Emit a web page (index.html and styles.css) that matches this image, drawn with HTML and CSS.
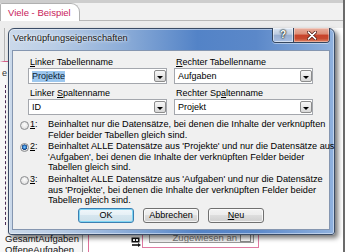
FILE: index.html
```html
<!DOCTYPE html>
<html lang="de">
<head>
<meta charset="utf-8">
<title>Verknüpfungseigenschaften</title>
<link rel="stylesheet" href="styles.css">
</head>
<body>
<div class="app">
  <div class="tabbar">
    <div class="tab">Viele - Beispiel</div>
  </div>
  <div class="workspace">
    <div class="nav">
      <div class="nav-head"></div>
      <div class="nav-body">
        <div class="nav-entry">e</div>
        <div class="nav-tree"></div>
        <div class="nav-item">GesamtAufgaben</div>
        <div class="nav-item">OffeneAufgaben</div>
      </div>
    </div>
    <div class="design">
      <div class="section">
        <div class="field-row">
          <svg class="field-icon" width="11" height="10" viewBox="0 0 11 10">
            <rect x="0.5" y="0.5" width="8" height="5" fill="#111"/>
            <rect x="2" y="2" width="2" height="2" fill="#fff"/>
            <rect x="5" y="2" width="2" height="2" fill="#fff"/>
            <path d="M1 8 H8" stroke="#111" stroke-width="1.6"/>
            <path d="M7 6 L10 8 L7 10 Z" fill="#111"/>
          </svg>
          <div class="field-box">
            <div class="field-inner">
              <span class="field-text">Zugewiesen an</span>
              <span class="field-drop"></span>
            </div>
          </div>
        </div>
      </div>
    </div>
  </div>

  <div class="dialog">
    <div class="titlebar">
      <span class="title">Verknüpfungseigenschaften</span>
      <div class="capbtns">
        <div class="cap-help">?</div>
        <div class="cap-close">
          <svg width="10" height="9" viewBox="0 0 10 9">
            <path d="M1.5 1.2 L8.5 7.8 M8.5 1.2 L1.5 7.8" stroke="#4a1208" stroke-width="3.2" stroke-linecap="round"/>
            <path d="M1.5 1.2 L8.5 7.8 M8.5 1.2 L1.5 7.8" stroke="#fff" stroke-width="1.8" stroke-linecap="round"/>
          </svg>
        </div>
      </div>
    </div>
    <div class="client">
      <div class="fields">
        <div class="field">
          <div class="label"><u>L</u>inker Tabellenname</div>
          <div class="combo"><span class="combo-text selected">Projekte</span><span class="drop"><span class="arrow"></span></span></div>
        </div>
        <div class="field">
          <div class="label"><u>R</u>echter Tabellenname</div>
          <div class="combo"><span class="combo-text">Aufgaben</span><span class="drop"><span class="arrow"></span></span></div>
        </div>
        <div class="field">
          <div class="label">Linker <u>S</u>paltenname</div>
          <div class="combo"><span class="combo-text">ID</span><span class="drop"><span class="arrow"></span></span></div>
        </div>
        <div class="field">
          <div class="label">Rechter Sp<u>a</u>ltenname</div>
          <div class="combo"><span class="combo-text">Projekt</span><span class="drop"><span class="arrow"></span></span></div>
        </div>
      </div>
      <div class="options">
        <div class="option">
          <span class="radio"></span>
          <span class="num"><u>1</u>:</span>
          <span class="desc">Beinhaltet nur die Datensätze, bei denen die Inhalte der verknüpften<br>Felder beider Tabellen gleich sind.</span>
        </div>
        <div class="option second">
          <span class="radio checked"></span>
          <span class="num"><u>2</u>:</span>
          <span class="desc">Beinhaltet ALLE Datensätze aus 'Projekte' und nur die Datensätze aus<br>'Aufgaben', bei denen die Inhalte der verknüpften Felder beider<br>Tabellen gleich sind.</span>
        </div>
        <div class="option third">
          <span class="radio"></span>
          <span class="num"><u>3</u>:</span>
          <span class="desc">Beinhaltet ALLE Datensätze aus 'Aufgaben' und nur die Datensätze<br>aus 'Projekte', bei denen die Inhalte der verknüpften Felder beider<br>Tabellen gleich sind.</span>
        </div>
      </div>
      <div class="buttons">
        <div class="btn default">OK</div>
        <div class="btn">Abbrechen</div>
        <div class="btn"><span><u>N</u>eu</span></div>
      </div>
    </div>
  </div>
</div>
</body>
</html>
```
FILE: styles.css
```css
* { box-sizing: border-box; margin: 0; padding: 0; }
html, body { width: 345px; height: 252px; overflow: hidden; }
body {
  font-family: "Liberation Sans", Arial, sans-serif;
  font-size: 9px;
  color: #000;
  background: #fff;
}
u { text-decoration: underline; text-underline-offset: 1px; }

.app {
  position: relative;
  width: 345px;
  height: 252px;
  border-right: 2px solid #6b6b6b;
  display: flex;
  flex-direction: column;
  background: #ececec;
}

/* document tab bar */
.tabbar {
  height: 21px;
  flex: none;
  display: flex;
  align-items: flex-end;
  background: linear-gradient(#cdcdcd 0, #cdcdcd 3px, #f1f1f1 3px);
  border-bottom: 1px solid #b8b8b8;
}
.tab {
  width: 80px;
  height: 18px;
  margin-bottom: -1px;
  padding-left: 7px;
  background: #fff;
  border: 1px solid #b0b0b0;
  border-bottom: none;
  border-radius: 2px 9px 0 0;
  color: #c8215a;
  font-size: 9.5px;
  line-height: 17px;
  white-space: nowrap;
}

/* background workspace */
.workspace {
  flex: 1;
  display: flex;
  min-height: 0;
  padding-top: 7px;
  background: #ececec;
}
.nav {
  width: 83px;
  flex: none;
  display: flex;
  flex-direction: column;
  background: #fff;
  border-right: 1px solid #a8a8a8;
}
.nav-head {
  height: 34px;
  flex: none;
  background: #ececec;
  border-left: 4px solid #ececec;
  box-shadow: inset 1px 0 0 #b5b5b5;
  border-bottom: 1px solid #d9608a;
}
.nav-body {
  flex: 1;
  display: flex;
  flex-direction: column;
  background: #f7f7f7;
}
.nav-entry {
  height: 11px;
  margin-top: 6px;
  padding-left: 2px;
  line-height: 11px;
  color: #333;
}
.nav-tree {
  height: 140px;
  margin: 6px 0 0 5px;
  border-left: 1px dashed #4a2a55;
}
.nav-item {
  height: 11px;
  padding-left: 5px;
  line-height: 11px;
  font-size: 9.5px;
  color: #111;
  white-space: nowrap;
}
.nav-tree + .nav-item { margin-top: 8px; }

.design {
  flex: 1;
  background: #fff;
  padding-left: 5px;
  display: flex;
  align-items: flex-start;
}
.section {
  flex: 1;
  margin-top: 200px;
  height: 30px;
  border-left: 1px solid #e0709a;
  padding-top: 4px;
}
.field-row {
  display: flex;
  align-items: center;
  padding-left: 42px;
}
.field-icon { flex: none; margin-top: 3px; }
.field-box {
  width: 117px;
  height: 16px;
  border: 1px solid #e07aa2;
  padding: 0 4px 0 6px;
}
.field-inner {
  height: 10px;
  border: 1px solid #9a9a9a;
  border-top: none;
  background: #f4f4f4;
  display: flex;
  justify-content: flex-end;
  align-items: center;
  padding-right: 2px;
  color: #777;
  font-size: 9.5px;
  line-height: 10px;
}
.field-drop {
  width: 11px;
  height: 8px;
  margin-left: 3px;
  border: 1px solid #8a8a8a;
  background: #fff;
}

/* dialog window */
.dialog {
  position: absolute;
  left: 8px;
  top: 28px;
  width: 327px;
  height: 207px;
  display: flex;
  flex-direction: column;
  padding: 0 4px 4px 3px;
  border: 1px solid #3a4c66;
  border-radius: 6px 6px 3px 3px;
  background: linear-gradient(90deg, #cbd9ea 0%, #b9cde6 14%, #8aabd7 36%, #5383c7 58%, #5b88c9 76%, #8fb1de 100%);
  box-shadow: inset 0 0 0 1px rgba(255,255,255,.45), 3px 3px 5px rgba(0,0,0,.55);
}
.titlebar {
  height: 21px;
  flex: none;
  display: flex;
  align-items: flex-start;
  padding-left: 1px;
}
.title {
  margin-top: 4px;
  font-size: 9.3px;
  line-height: 11px;
  color: #141414;
  text-shadow: 0 0 4px rgba(255,255,255,.9), 0 0 2px rgba(255,255,255,.8);
  white-space: nowrap;
}
.capbtns {
  margin-left: auto;
  margin-top: -1px;
  display: flex;
  height: 15px;
  border: 1px solid #34465f;
  border-top: none;
  border-radius: 0 0 4px 4px;
  overflow: hidden;
  box-shadow: 0 1px 0 rgba(255,255,255,.45);
}
.cap-help {
  width: 21px;
  border-right: 1px solid #34465f;
  background: linear-gradient(#dbe5f1 0%, #bccbe0 45%, #98aed0 50%, #a9bfe2 100%);
  box-shadow: inset 0 0 0 1px rgba(255,255,255,.5);
  color: #fff;
  font-weight: bold;
  font-size: 10px;
  line-height: 14px;
  text-align: center;
  text-shadow: 0 0 1px #233, 0 0 2px #233, 0 0 2px #233;
}
.cap-close {
  width: 35px;
  display: flex;
  align-items: center;
  justify-content: center;
  background: linear-gradient(#eab0a0 0%, #dc8f78 42%, #c8432b 52%, #c64a30 75%, #e08769 100%);
  box-shadow: inset 0 0 0 1px rgba(255,255,255,.35);
}

.client {
  flex: 1;
  display: flex;
  flex-direction: column;
  padding: 6px 0 6px;
  background: #f0f0f0;
  border: 1px solid #8596b0;
}
.fields {
  display: grid;
  grid-template-columns: 139px 139px;
  column-gap: 7px;
  row-gap: 4px;
  margin-left: 15px;
}
.label {
  height: 11px;
  padding-left: 2px;
  line-height: 11px;
  white-space: nowrap;
}
.combo {
  height: 16px;
  display: flex;
  align-items: center;
  padding-left: 3px;
  background: #fff;
  border: 1px solid #a4a7ad;
}
.combo-text { line-height: 11px; white-space: nowrap; }
.combo-text.selected { background: #9cc7ee; color: #0c1c33; }
.drop {
  width: 12px;
  height: 12px;
  margin-left: auto;
  display: flex;
  align-items: center;
  justify-content: center;
  border: 1px solid #8c8c8c;
  border-radius: 2px;
  background: linear-gradient(#f7f7f7, #e8e8e8 50%, #d7d7d7);
}
.arrow {
  width: 0;
  height: 0;
  margin-top: 2px;
  border-top: 3px solid #000;
  border-left: 3px solid transparent;
  border-right: 3px solid transparent;
}

.options {
  margin-top: 4px;
  padding-left: 7px;
  display: flex;
  flex-direction: column;
}
.option {
  display: flex;
  line-height: 10.5px;
  white-space: nowrap;
}
.option.second { margin-top: 1px; }
.option.third { margin-top: 1.5px; }
.radio {
  width: 9px;
  height: 9px;
  flex: none;
  margin-top: 1.5px;
  border-radius: 50%;
  border: 1px solid #8a8c8f;
  background: radial-gradient(circle at 50% 40%, #fdfdfd 0%, #e6e6e6 60%, #d2d2d2 100%);
}
.radio.checked {
  background: radial-gradient(circle at 50% 45%, #8fd0ff 0%, #2d7fd0 30%, #173f78 48%, #e4e4e4 56%, #d2d2d2 100%);
}
.num { width: 19px; flex: none; padding-left: 1px; }
.desc { flex: 1; font-size: 9.2px; }

.buttons {
  margin-top: 2px;
  display: flex;
  justify-content: center;
  gap: 9px;
}
.btn {
  width: 56px;
  height: 15px;
  display: flex;
  align-items: center;
  justify-content: center;
  border: 1px solid #707070;
  border-radius: 3px;
  background: linear-gradient(#f3f3f3 0%, #ebebeb 50%, #dddddd 50%, #cfcfcf 100%);
  box-shadow: inset 0 0 0 1px rgba(255,255,255,.75);
  line-height: 11px;
}
.btn.default {
  border-color: #3c7fb1;
  background: linear-gradient(#f0f7fb 0%, #e5eff5 50%, #d6e6ef 50%, #cde0ea 100%);
  box-shadow: inset 0 0 0 1px #7fd6f4;
}
```
